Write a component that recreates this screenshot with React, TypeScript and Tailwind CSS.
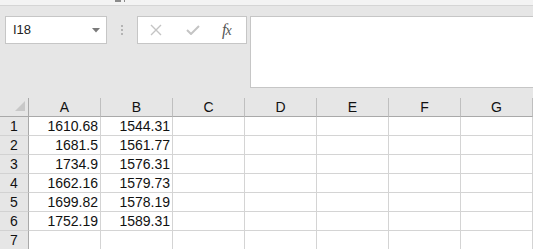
import { Fragment } from "react";

const cols = ["A", "B", "C", "D", "E", "F", "G"];

const rows: [string, string][] = [
  ["1610.68", "1544.31"],
  ["1681.5", "1561.77"],
  ["1734.9", "1576.31"],
  ["1662.16", "1579.73"],
  ["1699.82", "1578.19"],
  ["1752.19", "1589.31"],
  ["", ""],
];

function FormulaBar() {
  return (
    <div className="flex items-start h-[92px] bg-[#e6e6e6] pt-[10px] pl-[5px] overflow-hidden">
      <div className="flex items-center justify-between w-[102px] h-[28px] shrink-0 bg-white border border-[#c6c6c6] pl-[7px] pr-[6px]">
        <span className="text-[13px] text-[#222]">I18</span>
        <svg width="8" height="5" viewBox="0 0 8 5">
          <path d="M0 0 L8 0 L4 4.5 Z" fill="#7a7a7a" />
        </svg>
      </div>
      <div className="flex flex-col items-center justify-center gap-[2px] w-[30px] h-[28px] shrink-0">
        <span className="block w-[2px] h-[2px] bg-[#b4b4b4]" />
        <span className="block w-[2px] h-[2px] bg-[#b4b4b4]" />
        <span className="block w-[2px] h-[2px] bg-[#b4b4b4]" />
      </div>
      <div className="flex items-center w-[110px] h-[28px] shrink-0 bg-white border border-[#c6c6c6]">
        <svg width="12" height="12" viewBox="0 0 12 12" className="ml-[12px]">
          <path d="M1 1 L11 11 M11 1 L1 11" stroke="#c4c4c4" strokeWidth="1.4" />
        </svg>
        <svg width="14" height="10" viewBox="0 0 14 10" className="ml-[24px]">
          <path d="M1 5 L5 9 L13 1" stroke="#c4c4c4" strokeWidth="2" fill="none" />
        </svg>
        <span
          className="ml-[22px] text-[16px] italic text-[#555] leading-none tracking-[-1px]"
          style={{ fontFamily: '"Liberation Serif", serif' }}
        >
          f<span className="text-[14px]">x</span>
        </span>
      </div>
      <div className="ml-[3px] w-[300px] h-[72px] shrink-0 bg-white border border-[#c6c6c6]" />
    </div>
  );
}

export default function App() {
  return (
    <div
      className="w-[533px] h-[249px] overflow-hidden bg-white"
      style={{ fontFamily: '"Liberation Sans", Arial, sans-serif' }}
    >
      <div className="relative h-[6px] bg-[#f3f3f3] border-b border-[#d5d5d5]">
        <span className="absolute left-[115px] top-0 w-[6px] h-[2px] bg-[#8a8a8a]" />
        <span className="absolute left-[124px] top-0 w-[1px] h-[2px] bg-[#8a8a8a]" />
      </div>
      <FormulaBar />
      <div className="grid grid-cols-[29px_repeat(7,72px)] text-[14px] text-[#111]">
        <div className="relative h-[19px] bg-[#e6e6e6] border-r border-b border-[#a9a9a9]">
          <svg width="11" height="11" viewBox="0 0 11 11" className="absolute left-[15px] top-[3px]">
            <path d="M10 0 L10 10 L0 10 Z" fill="#c8c8c8" />
          </svg>
        </div>
        {cols.map((c) => (
          <div
            key={c}
            className="flex items-center justify-center h-[19px] bg-[#e6e6e6] border-r border-r-[#bfbfbf] border-b border-b-[#a9a9a9]"
          >
            {c}
          </div>
        ))}
        {rows.map((r, i) => (
          <Fragment key={i}>
            <div className="flex items-center justify-center h-[19px] bg-[#e6e6e6] border-r border-r-[#a9a9a9] border-b border-b-[#d2d2d2]">
              {i + 1}
            </div>
            {cols.map((c, j) => (
              <div
                key={c}
                className="flex items-center justify-end pr-[2px] h-[19px] border-r border-b border-[#d4d4d4]"
              >
                {j < 2 ? r[j] : ""}
              </div>
            ))}
          </Fragment>
        ))}
      </div>
    </div>
  );
}
